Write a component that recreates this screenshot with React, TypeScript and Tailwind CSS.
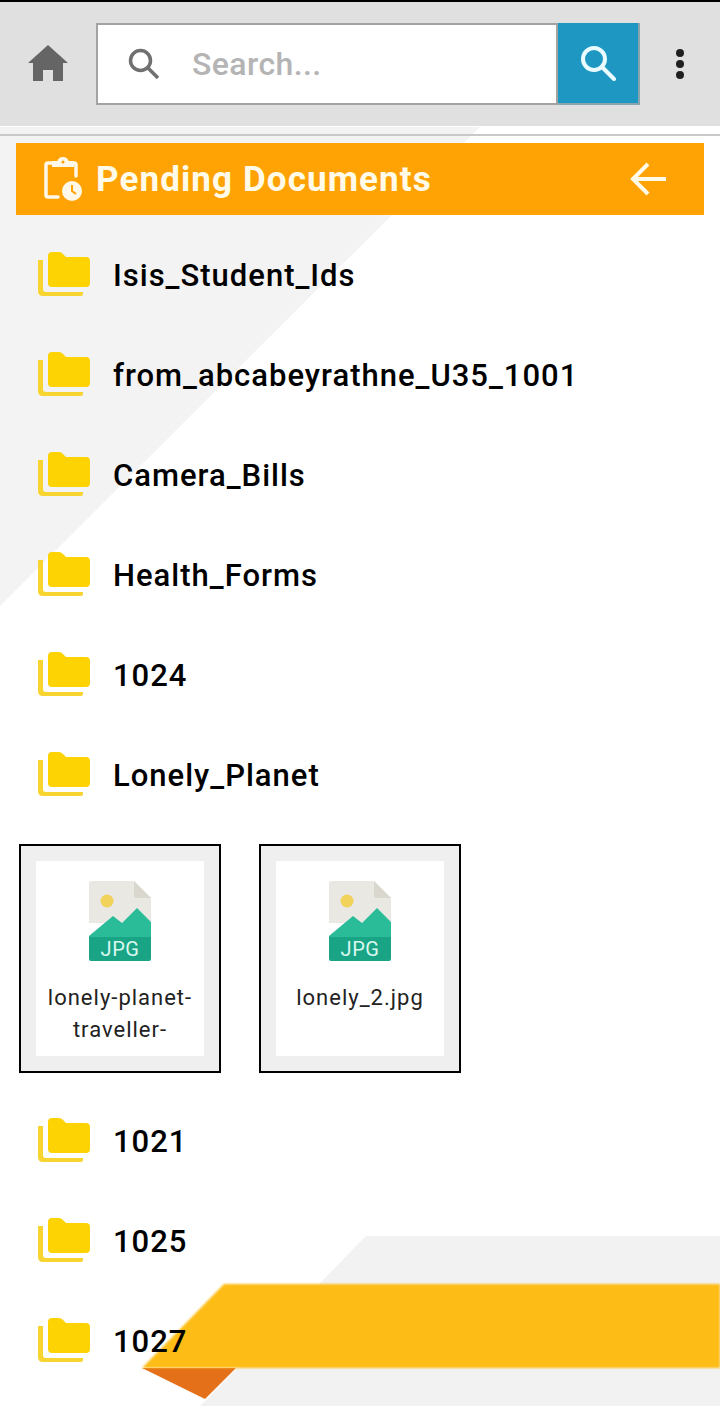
const roboto = "font-['Roboto',sans-serif]";

function FolderIcon() {
  return (
    <svg width="52" height="44" viewBox="0 0 52 44" className="shrink-0 relative top-[-1px]">
      <path d="M0 8h5v29q0 3 3 3h37v2q0 2-2 2H5q-5 0-5-5z" fill="#f8d431" />
      <path d="M10 4q0-4 4-4h7q2 0 3.500 1.500L28 5h20q4 0 4 4v22q0 4-4 4H14q-4 0-4-4z" fill="#fdd304" />
    </svg>
  );
}

function JpgIcon() {
  return (
    <svg width="62" height="80" viewBox="0 0 62 80">
      <path d="M2 0h43l17 17v25H0V2q0-2 2-2z" fill="#e9e8e2" />
      <path d="M45 0l17 17H47q-2 0-2-2z" fill="#d9d7ce" />
      <circle cx="18" cy="20" r="6.500" fill="#f1d35b" />
      <path d="M0 56V55L24 35l9 7 15-15 14 14v15z" fill="#2abb98" />
      <path d="M0 56h62v22q0 2-2 2H2q-2 0-2-2z" fill="#19a585" />
      <text x="31" y="75" textAnchor="middle" fontFamily="Roboto, sans-serif" fontSize="20" letterSpacing="0.5" fill="#d9f7ef">JPG</text>
    </svg>
  );
}

function FolderRow({ name }: { name: string }) {
  return (
    <div className="h-[100px] flex items-center pl-[38px] gap-[23px]">
      <FolderIcon />
      <span className="text-[31px] font-medium tracking-[1px] text-black leading-none">{name}</span>
    </div>
  );
}

function FileCard({ lines }: { lines: string[] }) {
  return (
    <div className="w-[202px] h-[229px] border-2 border-black bg-[#efefef] p-[15px]">
      <div className="h-full bg-white flex flex-col items-center pt-[20px]">
        <JpgIcon />
        <div className="mt-[21px] text-[22px] leading-[32px] tracking-[1px] text-[#222] text-center">
          {lines.map((l) => (
            <div key={l}>{l}</div>
          ))}
        </div>
      </div>
    </div>
  );
}

export default function App() {
  return (
    <div className={`${roboto} relative w-[720px] h-[1406px] overflow-hidden bg-white`}>
      {/* watermark artwork behind the list */}
      <svg width="720" height="1406" viewBox="0 0 720 1406" className="absolute inset-0">
        <path d="M0 606V127H480L0 606z" fill="#f3f3f3" />
        <path d="M366 1236H720V1406H200L366 1236z" fill="#f2f2f3" />
        <path d="M142 1368H236L205 1399z" fill="#e5701a" className="blur-[0.5px]" />
        <path d="M142 1368L224 1284H720V1368z" fill="#fdbd16" className="blur-[1px]" />
      </svg>

      <div className="relative">
        <div className="h-[2px] bg-black" />
        <div className="h-[124px] bg-[#e0e0e0] flex items-center pl-[28px]">
          <svg width="40" height="36" viewBox="0 0 40 36" className="shrink-0 relative top-[-1px]">
            <path d="M20 0L0 18h5v18h10V25h10v11h10V18h5L20 0z" fill="#656565" />
          </svg>
          <div className="ml-[28px] w-[462px] h-[82px] border-2 border-[#a3a3a3] bg-white flex items-center pl-[30px]">
            <svg width="32" height="32" viewBox="0 0 32 32" fill="none" stroke="#707070" strokeWidth="3.500">
              <circle cx="12.500" cy="12.500" r="10" />
              <path d="M20 20l10 10" />
            </svg>
            <span className="ml-[32px] text-[32px] font-medium text-[#b4b4b4] tracking-[0.4px]">Search...</span>
          </div>
          <div className="w-[82px] h-[82px] bg-[#1e98c3] flex items-center justify-center border-r-2 border-b-2 border-[#8aa4ae]">
            <svg width="36" height="36" viewBox="0 0 36 36" fill="none" stroke="#eafcff" strokeWidth="4">
              <circle cx="14" cy="14" r="11" />
              <path d="M22 22l12 12" strokeLinecap="round" />
            </svg>
          </div>
          <div className="ml-[36px] flex flex-col gap-[3px]">
            <div className="size-[8px] rounded-full bg-[#1f1f1f]" />
            <div className="size-[8px] rounded-full bg-[#1f1f1f]" />
            <div className="size-[8px] rounded-full bg-[#1f1f1f]" />
          </div>
        </div>
        <div className="h-[8px]" />
        <div className="h-[2px] bg-[#c9c9c9]" />

        <div className="mt-[7px] mx-[16px] h-[72px] bg-[#ffa304] flex items-center pl-[28px] pr-[38px]">
          <svg width="38" height="44" viewBox="0 0 38 44" className="shrink-0" fill="none" stroke="#fff8e8" strokeWidth="3.500">
            <path d="M9 6H4q-2 0-2 2v30q0 2 2 2h10" strokeLinecap="round" />
            <path d="M9 9V5h5q1-4 5-4t5 4h5v4z" fill="#fff8e8" strokeWidth="2" />
            <circle cx="19" cy="5" r="1.500" fill="#ffa304" stroke="none" />
            <path d="M29 6h1q2 0 2 2v11" strokeLinecap="round" />
            <circle cx="28" cy="34" r="10" fill="#fff8e8" stroke="none" />
            <path d="M28 28v6l4 3" stroke="#ffa304" strokeWidth="2" />
          </svg>
          <span className="ml-[14px] text-[35px] font-bold text-[#fffbe8] leading-none tracking-[1.1px]">Pending Documents</span>
          <svg width="36" height="34" viewBox="0 0 36 34" className="ml-auto" fill="none" stroke="#fffbe8" strokeWidth="4">
            <path d="M18 2L3 17l15 15M3 17h33" />
          </svg>
        </div>

        <div className="mt-[10px]">
          {["Isis_Student_Ids", "from_abcabeyrathne_U35_1001", "Camera_Bills", "Health_Forms", "1024", "Lonely_Planet"].map((n) => (
            <FolderRow key={n} name={n} />
          ))}
        </div>

        <div className="mt-[19px] ml-[19px] flex gap-[38px]">
          <FileCard lines={["lonely-planet-", "traveller-"]} />
          <FileCard lines={["lonely_2.jpg"]} />
        </div>

        <div className="mt-[18px]">
          {["1021", "1025", "1027"].map((n) => (
            <FolderRow key={n} name={n} />
          ))}
        </div>
      </div>
    </div>
  );
}
